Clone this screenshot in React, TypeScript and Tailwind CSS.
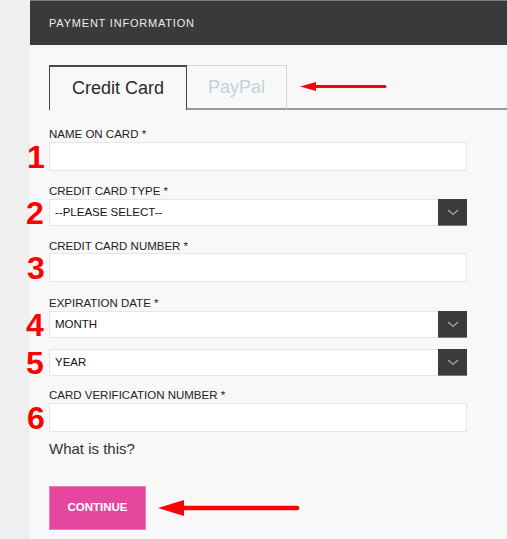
import React from "react";

function Chevron() {
  return (
    <svg width="12" height="7" viewBox="0 0 12 7" fill="none">
      <path d="M1 1l5 4.5L11 1" stroke="#a8a8a8" strokeWidth="1.3" />
    </svg>
  );
}

function Num({ n }: { n: string }) {
  return (
    <span className="absolute left-[-24px] top-1/2 -translate-y-1/2 w-[20px] text-center text-[32px] leading-none font-bold text-[#ff0000]">
      {n}
    </span>
  );
}

function SelectBox({ text, h }: { text: string; h: string }) {
  return (
    <div className={`relative flex ${h} w-full`}>
      <div className="flex-1 flex items-center bg-white border border-[#e6e6e6] border-r-0 pl-[5px] text-[11.5px] text-[#111]">
        {text}
      </div>
      <div className="w-[29px] bg-[#3b3b3b] border-b border-[#7a7a7a] flex items-center justify-center">
        <Chevron />
      </div>
    </div>
  );
}

export default function App() {
  return (
    <div className="flex w-[507px] h-[539px] overflow-hidden font-['Liberation_Sans',Arial,sans-serif]">
      <div className="w-[30px] shrink-0 bg-[#efefef]" />
      <div className="flex-1 bg-[#f8f8f8] flex flex-col">
        <div className="h-[45px] bg-[#3a3a3a] border-t border-[#7d7d7d] flex items-center pl-[19px] text-[11px] tracking-[0.8px] text-[#ececec]">
          PAYMENT INFORMATION
        </div>

        <div className="mt-[20px] pl-[19px] flex h-[45px]">
          <div className="w-[138px] h-[45px] border-t-2 border-l border-r border-[#474747] flex items-center justify-center text-[18px] text-[#2a2a2a]">
            Credit Card
          </div>
          <div className="w-[100px] h-[45px] border-t border-r border-[#cfd9dd] border-b-2 border-b-[#9a9a9a] flex items-center justify-center text-[18px] text-[#c3d1d8]">
            PayPal
          </div>
          <div className="flex-1 border-b-2 border-[#9a9a9a] flex items-center pl-[13px]">
            <svg width="87" height="11" viewBox="0 0 87 11">
              <polygon points="0,5.5 16,1 16,10" fill="#ff0000" />
              <line x1="14" y1="5.5" x2="85" y2="5.5" stroke="#ff0000" strokeWidth="3" strokeLinecap="round" />
            </svg>
          </div>
        </div>

        <div className="pl-[19px] pr-[40px] flex flex-col text-[#222]">
          <div className="mt-[17px] mb-[1px] h-[14px] leading-[14px] text-[11.5px]">NAME ON CARD *</div>
          <div className="relative h-[29px] bg-white border border-[#e6e6e6]">
            <Num n="1" />
          </div>

          <div className="mt-[13px] mb-[1px] h-[14px] leading-[14px] text-[11.5px]">CREDIT CARD TYPE *</div>
          <div className="relative">
            <SelectBox text="--PLEASE SELECT--" h="h-[27px]" />
            <Num n="2" />
          </div>

          <div className="mt-[13px] h-[14px] leading-[14px] text-[11.5px]">CREDIT CARD NUMBER *</div>
          <div className="relative h-[29px] bg-white border border-[#e6e6e6]">
            <Num n="3" />
          </div>

          <div className="mt-[14px] mb-[1px] h-[14px] leading-[14px] text-[11.5px]">EXPIRATION DATE *</div>
          <div className="relative">
            <SelectBox text="MONTH" h="h-[27px]" />
            <Num n="4" />
          </div>

          <div className="relative mt-[11px]">
            <SelectBox text="YEAR" h="h-[27px]" />
            <Num n="5" />
          </div>

          <div className="mt-[12px] mb-[1px] h-[14px] leading-[14px] text-[11.5px]">CARD VERIFICATION NUMBER *</div>
          <div className="relative h-[29px] bg-white border border-[#e6e6e6]">
            <Num n="6" />
          </div>

          <div className="mt-[8px] h-[18px] leading-[18px] text-[15px] text-[#333]">What is this?</div>

          <div className="mt-[28px] flex items-center">
            <div className="w-[97px] h-[44px] bg-[#e5479e] border border-[#ec7fba] flex items-center justify-center text-white text-[11.5px] font-bold">
              CONTINUE
            </div>
            <svg className="ml-[12px]" width="142" height="18" viewBox="0 0 142 18">
              <polygon points="0,9 26,1 26,17" fill="#ff0000" />
              <line x1="22" y1="9" x2="139" y2="9" stroke="#ff0000" strokeWidth="4.5" strokeLinecap="round" />
            </svg>
          </div>
        </div>
      </div>
    </div>
  );
}
